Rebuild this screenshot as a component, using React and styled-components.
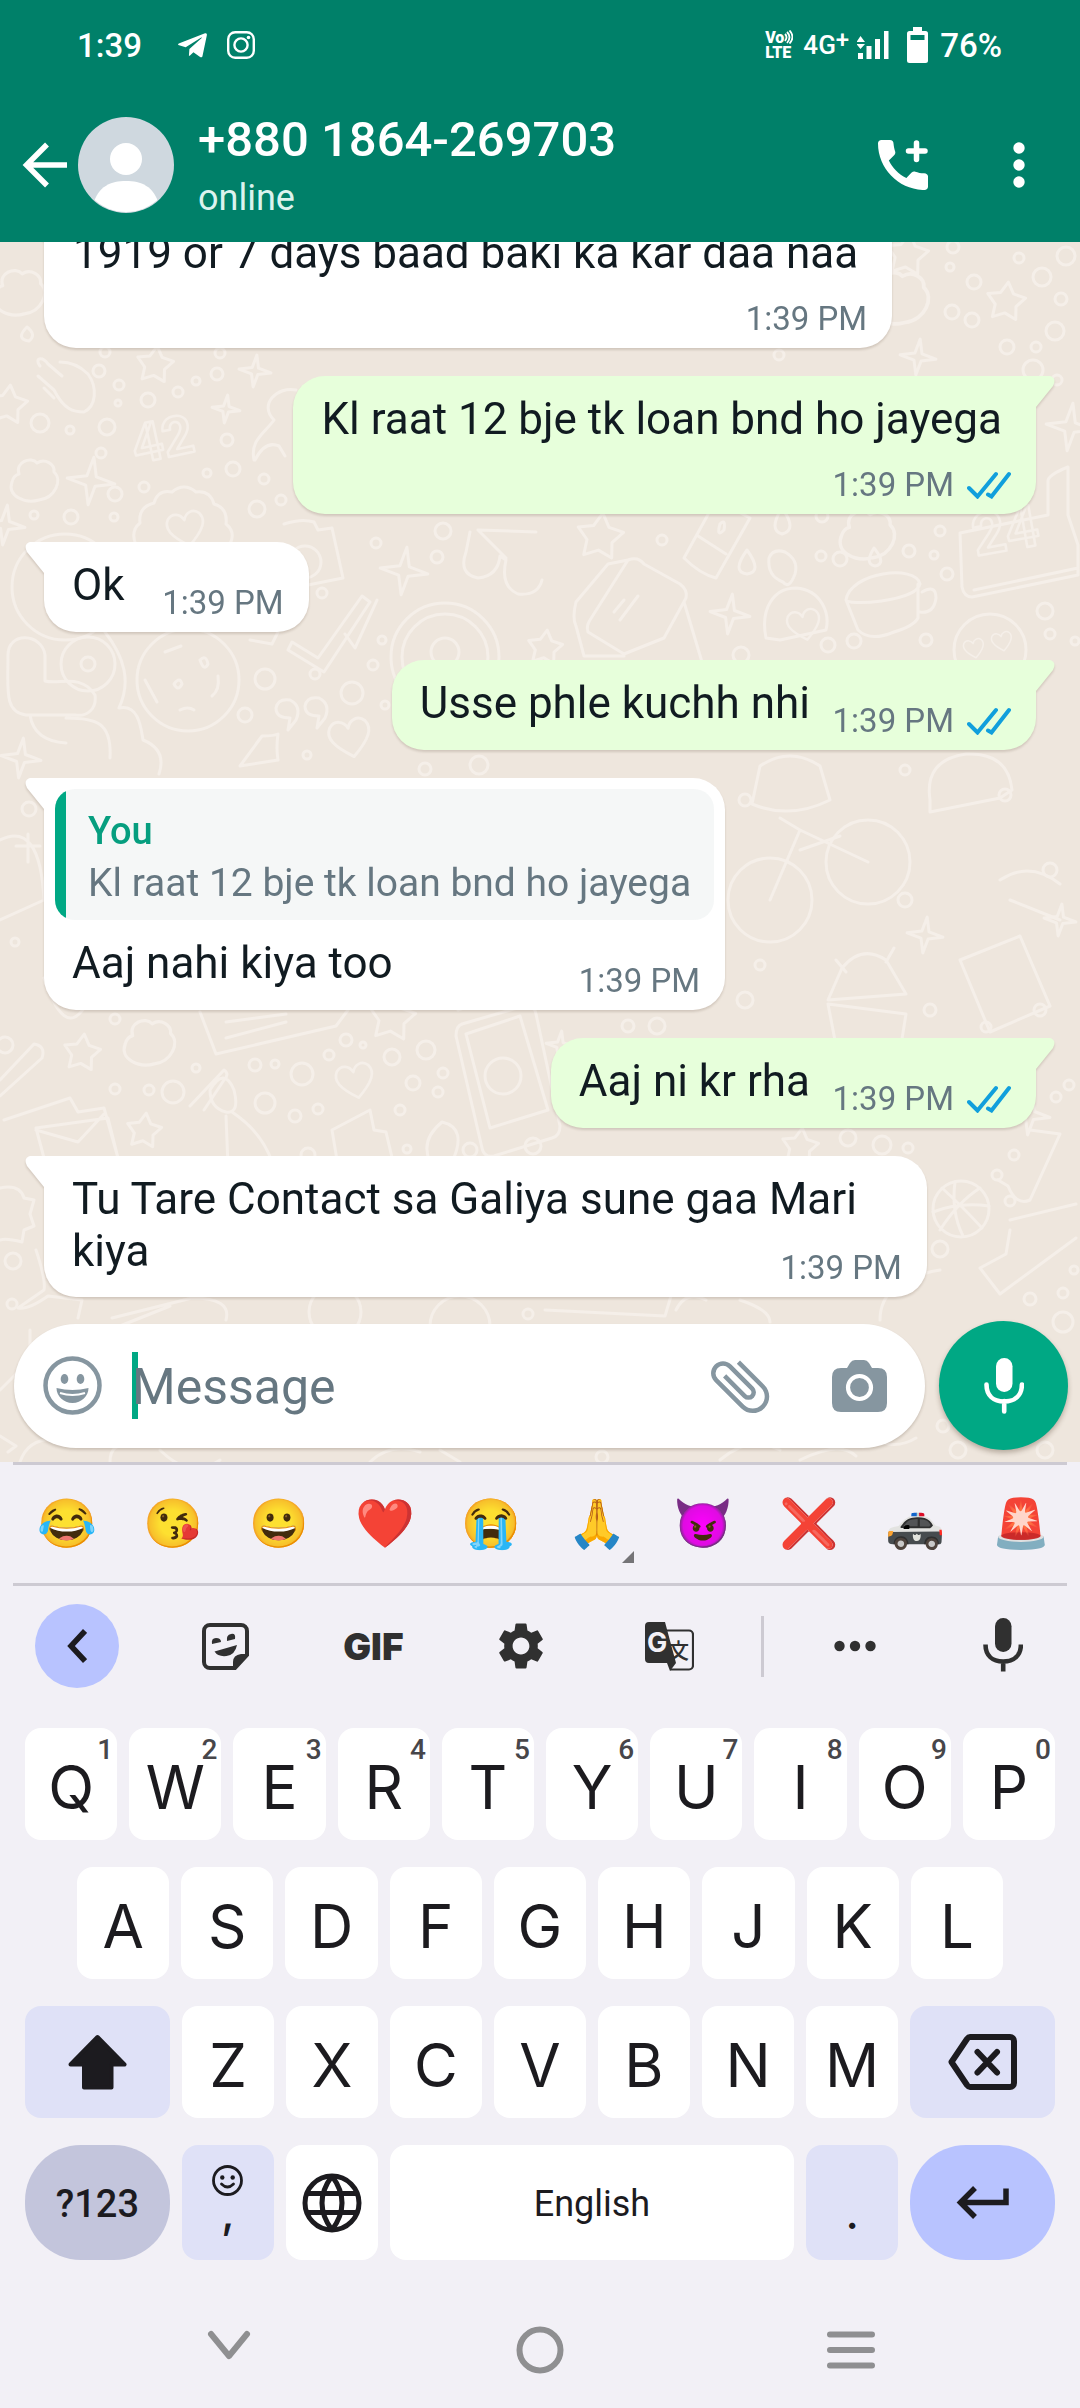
import React from "react";
import styled, { createGlobalStyle } from "styled-components";
import { FaTelegramPlane } from "react-icons/fa";
import { MdSettings, MdAttachFile } from "react-icons/md";

const GlobalStyle = createGlobalStyle`
  * {
    box-sizing: border-box;
  }
  body {
    margin: 0;
    font-family: Roboto, "Noto Sans", sans-serif;
  }
  button {
    border: 0;
    padding: 0;
    background: none;
    color: inherit;
    font: inherit;
    cursor: pointer;
  }
  svg {
    display: block;
    flex-shrink: 0;
  }
`;

const Screen = styled.div`
  display: flex;
  flex-direction: column;
  height: 100vh;
  background: #f2f0f6;
`;

/* ---------- top ---------- */

const TopBar = styled.header`
  background: #008069;
  color: white;
  height: 242px;
  flex-shrink: 0;
`;

const StatusBar = styled.div`
  display: flex;
  align-items: center;
  height: 88px;
  padding: 2px 78px 0 77px;
  font-size: 33px;
  font-weight: 500;
  .spacer {
    flex: 1;
  }
  .time {
    margin-right: 34px;
  }
  .insta {
    margin-left: 18px;
  }
  .net {
    display: flex;
    font-size: 26px;
    line-height: 30px;
    margin: 0 8px 0 10px;
  }
  .net sup {
    font-size: 24px;
    line-height: 20px;
  }
  .battery {
    margin: 0 12px 0 18px;
  }
`;

const Volte = styled.span`
  display: flex;
  flex-direction: column;
  font-size: 16px;
  line-height: 15px;
  font-weight: 900;
  .vo {
    display: flex;
  }
`;

const ContactBar = styled.div`
  display: flex;
  align-items: center;
  height: 154px;
  padding: 0 55px 0 22px;
  .back {
    margin-right: 10px;
  }
  .call {
    margin-right: 85px;
  }
`;

const Contact = styled.div`
  flex: 1;
  margin-left: 24px;
  padding-top: 4px;
  h1 {
    margin: 0;
    font-size: 49px;
    line-height: 62px;
    font-weight: 500;
  }
  p {
    margin: 0;
    font-size: 36px;
    line-height: 54px;
    color: #dcf3ee;
  }
`;

/* ---------- chat ---------- */

const Chat = styled.main`
  position: relative;
  flex: 1;
  min-height: 0;
  display: flex;
  flex-direction: column;
  justify-content: flex-end;
  overflow: hidden;
  background: #eee6dd;
`;

const Wallpaper = styled.svg`
  position: absolute;
  inset: 0;
  width: 100%;
  height: 100%;
  fill: none;
  stroke: #f5efe9;
  stroke-width: 3;
  stroke-linejoin: round;
  stroke-linecap: round;
`;

const Messages = styled.ul`
  position: relative;
  display: flex;
  flex-direction: column;
  gap: 28px;
  margin: 0;
  padding: 0 44px;
  list-style: none;
`;

const Bubble = styled.li`
  position: relative;
  max-width: 89%;
  align-self: ${(p) => (p.$mine ? "flex-end" : "flex-start")};
  background: ${(p) => (p.$mine ? "#e7ffdb" : "white")};
  border-radius: ${(p) => (p.$mine ? "32px 0 32px 32px" : "0 32px 32px 32px")};
  filter: drop-shadow(0 2px 1px rgba(60, 40, 20, 0.16));
  &::before {
    content: "";
    position: absolute;
    top: 0;
    width: 20px;
    height: 31px;
    background: inherit;
    ${(p) =>
      p.$mine
        ? `left: calc(100% - 1px); clip-path: path("M0 0 H15 Q22 2 18 10 L1 31 H0 Z");`
        : `right: calc(100% - 1px); clip-path: path("M20 0 H5 Q-2 2 2 10 L19 31 H20 Z");`}
  }
`;

const gaps = {
  in: "17px 184px 21px 28px",
  out: "17px 226px 21px 28px",
  stacked: "17px 34px 69px 29px",
  wrapped: "17px 48px 20px 28px",
};

// text and time share one grid cell, the time hugs the bottom right corner
const Body = styled.div`
  display: grid;
  p {
    grid-area: 1 / 1;
    margin: 0;
    padding: ${(p) => gaps[p.$layout]};
    font-size: 44px;
    line-height: 52px;
    color: #111b21;
  }
`;

const Meta = styled.div`
  grid-area: 1 / 1;
  align-self: end;
  justify-self: end;
  display: flex;
  align-items: center;
  gap: 13px;
  padding: 0 25px 9px 0;
  font-size: 33px;
  line-height: 40px;
  color: #667781;
`;

const Quote = styled.blockquote`
  margin: 11px 11px 0;
  padding: 16px 23px 11px 33px;
  border-radius: 20px;
  background: linear-gradient(to right, #00a884 11px, #f5f7f7 11px);
  font-size: 39px;
  line-height: 52px;
  color: #667781;
  strong {
    display: block;
    font-size: 38px;
    font-weight: 500;
    color: #069e7f;
  }
`;

const Composer = styled.form`
  position: relative;
  display: flex;
  align-items: center;
  gap: 14px;
  padding: 24px 12px 12px 14px;
`;

const InputPill = styled.div`
  flex: 1;
  display: flex;
  align-items: center;
  height: 124px;
  padding: 0 38px 0 29px;
  border-radius: 62px;
  background: white;
  color: #8696a0;
  box-shadow: 0 2px 3px rgba(60, 40, 20, 0.2);
  .field {
    position: relative;
    flex: 1;
    margin-left: 30px;
    padding-top: 2px;
  }
  .field::before {
    content: "";
    position: absolute;
    left: 0;
    top: -1px;
    width: 6px;
    height: 67px;
    background: #00a884;
  }
  input {
    position: relative;
    width: 100%;
    height: 64px;
    border: 0;
    outline: 0;
    padding: 0;
    background: transparent;
    font: 50px Roboto, sans-serif;
    color: #111b21;
  }
  input::placeholder {
    color: #667781;
    opacity: 1;
  }
  .clip {
    margin-right: 56px;
  }
`;

const MicButton = styled.button.attrs({ type: "button" })`
  display: grid;
  place-items: center;
  width: 129px;
  height: 129px;
  border-radius: 50%;
  background: #00a884;
  color: white;
  box-shadow: 0 3px 5px rgba(60, 40, 20, 0.3);
`;

/* ---------- keyboard ---------- */

const Keyboard = styled.section`
  flex-shrink: 0;
  color: #1c1b1f;
`;

const Rule = styled.hr`
  height: 3px;
  margin: 0 13px;
  border: 0;
  background: #cdcad2;
`;

const EmojiRow = styled.div`
  display: grid;
  grid-template-columns: repeat(10, 1fr);
  height: 118px;
  padding: 0 6px 0 14px;
  button {
    position: relative;
    font-family: "Noto Color Emoji", sans-serif;
    font-size: 48px;
    line-height: 60px;
  }
  .more::after {
    content: "";
    position: absolute;
    right: 16px;
    bottom: 20px;
    border: 6px solid #757477;
    border-top-color: transparent;
    border-left-color: transparent;
  }
`;

const Tools = styled.div`
  display: flex;
  align-items: center;
  height: 120px;
  padding: 0 3px;
  > button {
    flex: 1;
    display: grid;
    place-items: center;
    color: #303030;
  }
  .gif {
    font: 900 37px Inter, sans-serif;
  }
  .line {
    width: 3px;
    height: 61px;
    margin: 0 17px;
    background: #cdcad2;
  }
`;

const Collapse = styled.span`
  display: grid;
  place-items: center;
  width: 84px;
  height: 84px;
  border-radius: 50%;
  background: #b8c3ff;
  color: #1c1b1f;
`;

const Keys = styled.div`
  display: flex;
  flex-direction: column;
  gap: 27px;
  padding: 22px 25px 0;
`;

const KeyRow = styled.div`
  display: flex;
  gap: 12px;
  padding: 0 ${(p) => (p.$indent ? 52 : 0)}px;
`;

const tones = {
  plain: "white",
  soft: "#dfe1f7",
  dark: "#c3c5dc",
  accent: "#b8c3ff",
};

const Key = styled.button`
  position: relative;
  display: flex;
  flex-direction: column;
  align-items: center;
  justify-content: center;
  flex: ${(p) => p.$grow || 92} 0 0;
  height: ${(p) => (p.$tall ? 115 : 112)}px;
  padding-top: ${(p) => (p.$letter ? 6 : 0)}px;
  border-radius: ${(p) => (p.$pill ? 56 : 16)}px;
  background: ${(p) => tones[p.$tone || "plain"]};
  font: 400 60px/72px Inter, sans-serif;
  small {
    position: absolute;
    top: 5px;
    right: 4px;
    font: 500 28px/34px Roboto, sans-serif;
    color: #47464a;
  }
  .label {
    padding-top: 2px;
    font: 400 36px/44px Roboto, sans-serif;
  }
  .mode {
    padding-top: 2px;
    font: 500 38px/48px Roboto, sans-serif;
  }
  .punct {
    padding-bottom: 12px;
    font: 500 44px/32px Inter, sans-serif;
  }
  .low {
    padding-top: 32px;
  }
`;

const NavBar = styled.nav`
  display: grid;
  grid-template-columns: repeat(3, 1fr);
  height: 148px;
  flex-shrink: 0;
  padding: 32px 73px 0;
  color: #8f8f91;
  button {
    display: grid;
    place-items: center;
  }
  .hide {
    padding-bottom: 10px;
  }
`;

/* ---------- icons ---------- */

const Line = ({ w, h, sw, children, ...rest }) => (
  <svg
    width={w}
    height={h}
    viewBox={`0 0 ${w} ${h}`}
    fill="none"
    stroke="currentColor"
    strokeWidth={sw}
    aria-hidden="true"
    {...rest}
  >
    {children}
  </svg>
);

const InstagramIcon = () => (
  <Line w={28} h={28} sw={2.4} className="insta">
    <rect x="1.2" y="1.2" width="25.6" height="25.6" rx="7" />
    <circle cx="14" cy="14" r="6.6" />
    <circle cx="21.5" cy="6.5" r="1.8" fill="currentColor" stroke="none" />
  </Line>
);

const WavesIcon = () => (
  <Line w={9} h={14} sw={1.8}>
    <path d="M1 4 q3 3 0 7 M3 2 q5 5 0 11 M5.5 .5 q6 6.5 0 13" />
  </Line>
);

const SignalIcon = () => (
  <Line w={32} h={28} sw={0} fill="currentColor">
    <path d="M1 22h5v6H1zM9.5 15h5v13h-5zM18 8h5v20h-5zM27 0h4.5v28H27zM3.5 5L8 11H-.5zM3.5 18L8 13H-.5z" />
  </Line>
);

const BatteryIcon = () => (
  <Line w={21} h={36} sw={0} fill="currentColor" className="battery">
    <path d="M6 0h9v4h-9z" />
    <rect y="4" width="21" height="32" rx="2.5" />
    <rect x="3.5" y="8" width="14" height="5" fill="#008069" />
  </Line>
);

const BackIcon = () => (
  <Line w={46} h={46} sw={5.5}>
    <path d="M45 23H5M25 2.5L4.5 23L25 43.5" />
  </Line>
);

const Avatar = () => (
  <svg width="96" height="96" viewBox="0 0 96 96" aria-hidden="true">
    <clipPath id="face">
      <circle cx="48" cy="48" r="47" />
    </clipPath>
    <circle cx="48" cy="48" r="48" fill="#cfd8df" />
    <g clipPath="url(#face)" fill="white">
      <circle cx="48" cy="42" r="16" />
      <path d="M15 88C20 69 33 64 48 64s28 5 33 24v10H15z" />
    </g>
  </svg>
);

const CallAddIcon = () => (
  <Line w={50} h={50} sw={5.5} strokeLinecap="round">
    <path
      transform="translate(-8.34 -8.34) scale(2.78)"
      fill="currentColor"
      stroke="none"
      d="M19.6 15c-1.2 0-2.2-.3-3.2-.6-.5-.2-.9 0-1.3.3l-1.9 2c-2.83-1.44-5-3.6-6.3-6.3l1.9-1.9c.4-.4.5-.9.4-1.3C8.8 6 8.7 5.3 8.6 4.4c0-.9-.5-1.4-1.3-1.4H4.300c-.8 0-1.300.5-1.300 1.300C3 13.400 10.600 21 19.700 21c.8 0 1.300-.5 1.300-1.300v-3.400c0-.8-.5-1.200-1.400-1.300z"
    />
    <path d="M38.5 3v16.5M30.5 11h16.5" />
  </Line>
);

const DotsIcon = () => (
  <Line w={12} h={46} sw={0} fill="currentColor">
    <circle cx="6" cy="6" r="5.7" />
    <circle cx="6" cy="23" r="5.7" />
    <circle cx="6" cy="40" r="5.7" />
  </Line>
);

const TicksIcon = () => (
  <Line w={44} h={28} sw={4} stroke="#119fdc" strokeLinecap="round">
    <path d="M2 17l8.5 8.5L29 3M21 23.5l3.5 2L42 3" />
  </Line>
);

const SmileIcon = () => (
  <Line w={59} h={59} sw={4.5}>
    <circle cx="29.5" cy="29.5" r="27" />
    <g fill="currentColor" stroke="none">
      <ellipse cx="21.5" cy="23" rx="3.8" ry="5" />
      <ellipse cx="37.5" cy="23" rx="3.8" ry="5" />
      <path d="M13.5 32q16 4 32 0c0 8-7 15-16 15s-16-7-16-15z" />
    </g>
    <path d="M17 37q12.5 4 25 0" stroke="white" strokeWidth="2" />
  </Line>
);

const CameraIcon = () => (
  <Line w={55} h={52} sw={0} fill="currentColor">
    <path d="M9 8h6l3-5q2-3 5-3h9q3 0 5 3l3 5h6q9 0 9 9v26q0 9-9 9H9q-9 0-9-9V17q0-9 9-9z" />
    <circle cx="27.5" cy="27.5" r="11.5" stroke="white" strokeWidth="4.2" />
  </Line>
);

const MicIcon = ({ round }) => (
  <Line w={40} h={56} sw={4.6} strokeLinecap={round ? "round" : "butt"}>
    <rect x="12" y="0" width="16.5" height="34" rx="8.2" fill="currentColor" stroke="none" />
    <path d="M2.5 26.5c0 11 7 17 17.7 17s17.7-6 17.7-17M20.2 43v10.5" />
  </Line>
);

const StickerIcon = () => (
  <Line w={47} h={47} sw={4}>
    <path d="M8 2h31a6 6 0 0 1 6 6v24L33 45H8a6 6 0 0 1-6-6V8a6 6 0 0 1 6-6z" />
    <g fill="currentColor" stroke="none">
      <path d="M46 31h-7q-8 1-8 8v7z" />
      <path d="M10 21q-1-6 4-6t5 4zM25 18q-1-6 4-7t4 5zM12.5 28.5L35 22q-2 10-10.5 11t-12-4.5z" />
    </g>
  </Line>
);

const TranslateIcon = () => (
  <Line w={49} h={49} sw={2.2}>
    <path d="M20 8.5h24a4 4 0 0 1 4 4v31a4 4 0 0 1-4 4H25" />
    <text
      x="23"
      y="36"
      fontSize="21"
      fontWeight="500"
      fontFamily="Noto Sans CJK JP"
      fill="currentColor"
      stroke="none"
    >
      文
    </text>
    <path d="M4 0h16l11 41-6 8-3-8H4a4 4 0 0 1-4-4V4a4 4 0 0 1 4-4z" fill="currentColor" stroke="none" />
    <text x="2" y="30" fontSize="27" fontWeight="700" fontFamily="Inter" fill="#f2f0f6" stroke="none">
      G
    </text>
  </Line>
);

const EllipsisIcon = () => (
  <Line w={42} h={12} sw={0} fill="currentColor">
    <circle cx="5.5" cy="6" r="5.2" />
    <circle cx="21" cy="6" r="5.2" />
    <circle cx="36.5" cy="6" r="5.2" />
  </Line>
);

const ShiftIcon = () => (
  <Line w={59} h={56} sw={4} fill="currentColor" strokeLinejoin="round">
    <path d="M29.5 3L56.5 30.5H43.5V53.5H16V30.5H2.5z" />
  </Line>
);

const BackspaceIcon = () => (
  <Line w={70} h={56} sw={6} strokeLinejoin="round">
    <path d="M22 3h40a4 4 0 0 1 4 4v42a4 4 0 0 1-4 4H22q-1.5 0-3-2L3.5 28L19 5q1.5-2 3-2z" />
    <path d="M29.5 18l19.5 20.5M49 18L29.5 38.5" strokeLinecap="round" />
  </Line>
);

const GlobeIcon = () => (
  <Line w={60} h={60} sw={5}>
    <circle cx="30" cy="30" r="27" />
    <path d="M5 20.5h50M5 39.5h50M30 3q-20 27 0 54M30 3q20 27 0 54" />
  </Line>
);

const SmallSmile = () => (
  <Line w={31} h={31} sw={2.8}>
    <circle cx="15.5" cy="15.5" r="14" />
    <circle cx="10.3" cy="12.5" r="2.2" fill="currentColor" stroke="none" />
    <circle cx="20.7" cy="12.5" r="2.2" fill="currentColor" stroke="none" />
    <path d="M9.5 19q6 6 12 0" strokeLinecap="round" />
  </Line>
);

const EnterIcon = () => (
  <Line w={53} h={33} sw={5.5}>
    <path d="M50 2.5v14H4M19 2L4.5 16.5L19 31" />
  </Line>
);

/* ---------- wallpaper drawing ---------- */

const rings = [
  [99, 371, 6], [119, 385, 5], [217, 374, 6], [196, 381, 4], [178, 392, 5], [148, 400, 7],
  [40, 423, 9], [70, 430, 4], [118, 403, 3], [107, 427, 8], [101, 453, 5], [227, 440, 6],
  [233, 469, 7], [207, 473, 4], [264, 479, 5], [144, 487, 5], [115, 494, 7], [281, 500, 5],
  [257, 509, 8], [34, 515, 4], [71, 517, 7], [114, 517, 4], [443, 531, 8], [376, 543, 5],
  [437, 557, 6], [322, 593, 5], [382, 640, 4], [373, 665, 5], [265, 679, 10], [315, 674, 5],
  [352, 693, 11], [385, 705, 4], [245, 715, 7], [307, 755, 4], [662, 540, 5], [821, 556, 5],
  [840, 559, 7], [909, 551, 6], [940, 531, 5], [934, 555, 4], [947, 574, 6], [822, 516, 6],
  [828, 645, 7], [854, 641, 7], [926, 640, 6], [1045, 611, 8], [1050, 634, 5], [1075, 641, 4],
  [1033, 370, 10], [1057, 380, 5], [741, 655, 8], [29, 809, 7], [15, 942, 4], [115, 1019, 5],
  [5, 1045, 8], [196, 1068, 4], [255, 1065, 6], [275, 1064, 4], [302, 1074, 11], [115, 1089, 5],
  [149, 1090, 5], [173, 1092, 11], [265, 1103, 10], [295, 1116, 6], [318, 1109, 5],
  [346, 1040, 6], [363, 1045, 3], [329, 1055, 5], [392, 1057, 8], [426, 1050, 9], [443, 1073, 5],
  [413, 1083, 7], [438, 1092, 5], [400, 1110, 5], [628, 1026, 6], [657, 1026, 8], [425, 769, 6],
  [479, 765, 9], [407, 1149, 4], [533, 1146, 8], [953, 247, 6], [1019, 258, 5], [1066, 256, 9],
  [950, 267, 4], [974, 282, 7], [1042, 277, 9], [1061, 299, 6], [952, 312, 7], [972, 320, 7],
  [1055, 331, 9], [1007, 347, 7], [1036, 347, 5], [105, 352, 5], [220, 353, 5], [779, 355, 5],
  [848, 1138, 8], [882, 1145, 9], [908, 1148, 5], [1069, 1085, 5], [1056, 1097, 5],
  [1014, 1155, 5], [997, 1175, 5], [1010, 1201, 5], [940, 1249, 8], [1030, 1299, 6],
  [1063, 1293, 5], [1063, 1322, 10], [1074, 1270, 4], [13, 1261, 8], [12, 1304, 5],
  [528, 1314, 5], [943, 1426, 6], [958, 1450, 8], [1045, 1450, 8], [986, 1027, 5],
  [470, 1150, 7], [308, 1155, 7], [602, 1457, 6], [1005, 795, 6], [745, 800, 6], [905, 900, 7],
  [930, 1010, 6], [745, 1000, 8], [1050, 870, 7], [1040, 1010, 6], [905, 770, 5], [760, 965, 5],
];

const stars = [
  [8, 405, 20], [155, 365, 19], [600, 537, 24], [82, 1053, 19], [392, 1018, 24],
  [144, 1131, 18], [1006, 302, 20], [907, 255, 22], [800, 1147, 19], [545, 648, 18],
];

const sparkles = [
  [255, 371, 16], [226, 409, 14], [91, 481, 24], [404, 571, 24], [5, 525, 20], [21, 758, 20],
  [730, 614, 20], [1070, 427, 24], [918, 357, 18], [1030, 1115, 20], [560, 1045, 14],
  [925, 935, 18], [1060, 920, 16],
];

const hearts = [
  [186, 528, 18], [350, 737, 20], [804, 624, 16], [974, 648, 10], [1002, 641, 10], [355, 1080, 18],
];

const clouds = [
  [20, 290, 26], [35, 478, 24], [900, 295, 30], [868, 532, 28], [150, 1040, 26],
];

const polar = (cx, cy, r, n, inner) =>
  "M" +
  Array.from({ length: n * 2 }, (_, i) => {
    const a = (Math.PI * i) / n - 1.45;
    const k = i % 2 ? r * inner : r;
    return `${(cx + k * Math.cos(a)).toFixed(1)} ${(cy + k * Math.sin(a)).toFixed(1)}`;
  }).join("L") +
  "Z";

const Doodles = () => (
  <Wallpaper viewBox="0 242 1080 1220" preserveAspectRatio="xMidYMin slice" aria-hidden="true">
    {rings.map(([x, y, r], i) => (
      <circle key={i} cx={x} cy={y} r={r} />
    ))}
    {stars.map(([x, y, r], i) => (
      <path key={i} d={polar(x, y, r, 5, 0.55)} />
    ))}
    {sparkles.map(([x, y, r], i) => (
      <path key={i} d={polar(x, y, r, 4, 0.28)} />
    ))}
    {hearts.map(([x, y, s], i) => (
      <path
        key={i}
        transform={`translate(${x} ${y}) rotate(-12) scale(${s / 20})`}
        d="M0 20C-18 6-24-4-18-13-12-20-3-17 0-9 3-17 12-20 18-13 24-4 18 6 0 20z"
      />
    ))}
    {clouds.map(([x, y, s], i) => (
      <path
        key={i}
        transform={`translate(${x} ${y}) scale(${s / 24})`}
        d="M-16-4C-20-16-4-22 2-15 10-20 20-14 19-6 28 2 20 20 4 22-10 26-28 18-23 4-22 0-20-3-16-4z"
      />
    ))}
    {/* badge, cookie, ring, basketball */}
    <path d="M136 545q-6-14 4-22-2-16 14-20 4-14 18-11 12-10 24 0 14-2 18 12 14 4 12 20 10 8 4 20M139 545q48 30 96 0" />
    <circle cx="188" cy="680" r="51" />
    <path d="M165 652l16-6M200 660q6-6 8 4-4 8-8-4M174 684q6-8 8 0-4 8-8 0M145 680l12 22M218 676q2 14-6 20M180 710q8-4 14 0" />
    <circle cx="445" cy="657" r="54" />
    <circle cx="445" cy="657" r="43" />
    <circle cx="445" cy="652" r="14" />
    <circle cx="961" cy="1209" r="28" />
    <path d="M942 1188q20 18 40 40M980 1188q-22 14-40 42M933 1212q26-10 56-6M955 1182q-4 30 8 54" />
    {/* dancer with a speaker */}
    <circle cx="65" cy="587" r="53" />
    <circle cx="88" cy="664" r="27" />
    <circle cx="88" cy="664" r="7" />
    <path d="M8 655c0-24 34-22 37 0v26c14 4 36-8 50 14 2 14-8 22-20 20H26C4 712 8 690 8 655zM30 715q4 26 36 28M66 718c30 0 46 4 44 40M105 632c20 26 26 50 14 76 20-4 22 20 24 32 20 8 20 22 16 34" />
    {/* hand, camera, glasses, ticks, quotes */}
    <path d="M40 366c-6-8 2-10 8-2l14 12M38 376l16 14M44 388l10 10M54 390c10 20 20 22 30 22 12-6 14-24 4-38-10-10-20-12-28-12" />
    <path d="M284 524q18-6 30-2l4 8 14-2 11 50-50 10" />
    <circle cx="305" cy="562" r="16" />
    <path d="M470 532l-4 20q-8 22 12 26 20-2 22-22l6 4q-6 26 12 34 20 2 24-14M478 530l58 2M478 530l28 28" />
    <path d="M292 642l26 16 44-62 8 6-46 70-36-22zM345 634l10 14 22-48M250 640l22 4 6-12" />
    <path d="M276 708q2-10 14-8 12 6 6 20l-8 10 2-12q-14 0-14-10zM305 706q2-10 14-8 12 6 6 20l-8 10 2-12q-14 0-14-10z" />
    <path d="M240 766l22-30q12 0 16-2-2 14 0 26z" />
    <text x="136" y="464" fontSize="54" fontWeight="700" transform="rotate(-12 136 464)" strokeWidth="2.5">
      42
    </text>
    <path d="M254 460c-4-20 10-26 20-40-16-16 4-34 22-30M255 460q10-20 24-14l6 10" />
    {/* bottle, drops, box, face, cup, calendar */}
    <path d="M716 500l-32 58q16 16 32 20l34-60zM698 536l28 18M720 524q6-6 4 6-8 8-4-6" />
    <path d="M747 550q-16 22 0 24 16-2 0-24zM874 548q-10 16 1 18 12-2-1-18zM782 508q-14 22 0 26 16-4 0-26zM27 327q-12 12 2 14 8-6-2-14z" />
    <path d="M769 558q4-10 16-6 14 8 10 22-6 16-12 8-16-6-14-24z" />
    <path d="M628 560q10-4 16 4l36 20q8 6 6 14l-22 40-40 16-36-22q-2-6 2-12zM628 560l-20 4-32 38q-4 16 0 24l8 30h40M684 602l18 60M620 620l18-24M614 612l10-12" />
    <path d="M766 638c-6-30 8-50 30-50 26 2 34 26 30 42l-46 10z" />
    <path d="M846 600c4-28 70-36 74-16-4 18-74 22-74 16l12 30q12 12 36 2 20-6 24-14V584M922 592q14-8 14 6-2 16-16 14" />
    <path d="M960 533l88-18v-34q0-6 20-14v48l10 30v30l-106 22q-8 0-10-10zM974 590l104-22" />
    <text x="976" y="556" fontSize="58" fontWeight="700" transform="rotate(-10 976 556)" strokeWidth="2.5">
      24
    </text>
    <circle cx="990" cy="650" r="36" />
    {/* right side: cap, headphones, bicycle, robot, book */}
    <circle cx="770" cy="900" r="42" />
    <circle cx="868" cy="862" r="42" />
    <path d="M770 900l30-70 68 32M800 830l-20-12M800 850l40-14" />
    <path d="M828 1000l14-32q20-24 44-8l20 34zM828 1004l78 10-8 50-60-8zM846 972l-10-12M886 962l8-14" />
    <path d="M930 800q-6-40 36-46 42-2 46 36l-12 8-70 14zM760 766q30-20 60 0l10 34q-40 20-78 4z" />
    <path d="M960 960l60-24 30 70-60 26zM1000 880q30-20 60 4M1010 900l50 20" />
    {/* phone, envelopes, balloon, clock */}
    <path d="M462 1024l62-18q10-2 12 8l24 112q0 10-8 12l-58 18q-10 2-12-8l-26-112q0-10 6-12zM466 1034l54-18 28 94-58 18z" />
    <circle cx="503" cy="1076" r="18" />
    <path d="M442 1122q-22 18-12 40 10 14 22 0 16-34-10-40zM4 1120l66-22 8 14 26-4 14 50M36 1128l72-10 10 40H44zM36 1130l42 12 26-28" />
    <path d="M200 1012l16 42 120-28 12-16M226 1022l60-8M226 1038l60-16M458 1010q60-24 90-4" />
    <path d="M0 840q40-20 44 60l-44 20M16 846h24M28 834v28M44 978q20 60 40 30M0 1080l34-36q12 2 8 14L0 1096" />
    <path d="M190 1106l34-36q6 4 0 10l-20 30M210 1090q14-24 24 0 6 24-8 22-16-4-16-22zM232 1112q30 20 40 50M226 1116l2 50M332 1130l38-20 4 20 12 2 8 34h-56z" />
    {/* bottom strip */}
    <path d="M0 1188q20-4 24 10l10 2-4 14 4 12-10 4-2 12q-16-4-22-2M36 1250q10 30 8 40l-26 18q10 2 30-12l34 4-4 18M110 1330l60-24M112 1318l80-20q40 0 34 22" />
    <circle cx="335" cy="1312" r="26" />
    <circle cx="460" cy="1326" r="30" />
    <path d="M545 1310l120 6 6-20M676 1310q10-20 30-10M740 1300q30 10 30 22M880 1320q0-40 60-50M1030 1130l30 4-30 66q-14 6-22-14l-10-6M1010 1220l66-16M1010 1230l-4 24-26 14 20 26 76-56M0 1390l30-30v-30M20 1462q10-30 50-20M110 1462q0-20 20-16M160 1450q30 30 60 10" />
    <path d="M370 1462q20-20 50-10M440 1450l20 12M720 1460q30-26 60-10M800 1460q40-20 56-4M876 1440q20 10 40-2M0 1436l16 10-8 6" />
  </Wallpaper>
);

/* ---------- content ---------- */

const messages = [
  { text: "1919 or 7 days baad baki ka kar daa naa", layout: "stacked" },
  { text: "Kl raat 12 bje tk loan bnd ho jayega", layout: "stacked", mine: true },
  { text: "Ok" },
  { text: "Usse phle kuchh nhi", mine: true },
  { text: "Aaj nahi kiya too", quote: "Kl raat 12 bje tk loan bnd ho jayega" },
  { text: "Aaj ni kr rha", mine: true },
  { text: "Tu Tare Contact sa Galiya sune gaa Mari kiya", layout: "wrapped" },
];

const emojis = ["😂", "😘", "😀", "❤️", "😭", "🙏", "😈", "❌", "🚓", "🚨"];

const Message = ({ text, mine, quote, layout }) => (
  <Bubble $mine={mine}>
    {quote && (
      <Quote>
        <strong>You</strong>
        {quote}
      </Quote>
    )}
    <Body $layout={layout || (mine ? "out" : "in")}>
      <p>{text}</p>
      <Meta>
        <time>1:39 PM</time>
        {mine && <TicksIcon />}
      </Meta>
    </Body>
  </Bubble>
);

const Letters = ({ row }) =>
  row.split("").map((l) => (
    <Key key={l} $letter>
      {l}
    </Key>
  ));

const App = () => {
  return (
    <Screen>
      <GlobalStyle />
      <TopBar>
        <StatusBar>
          <span className="time">1:39</span>
          <FaTelegramPlane size={33} />
          <InstagramIcon />
          <span className="spacer" />
          <Volte>
            <span className="vo">
              Vo
              <WavesIcon />
            </span>
            <span>LTE</span>
          </Volte>
          <span className="net">
            4G<sup>+</sup>
          </span>
          <SignalIcon />
          <BatteryIcon />
          <span>76%</span>
        </StatusBar>
        <ContactBar>
          <button className="back" aria-label="Back">
            <BackIcon />
          </button>
          <Avatar />
          <Contact>
            <h1>+880 1864-269703</h1>
            <p>online</p>
          </Contact>
          <button className="call" aria-label="Add call">
            <CallAddIcon />
          </button>
          <button aria-label="More options">
            <DotsIcon />
          </button>
        </ContactBar>
      </TopBar>

      <Chat>
        <Doodles />
        <Messages>
          {messages.map((m) => (
            <Message key={m.text} {...m} />
          ))}
        </Messages>
        <Composer>
          <InputPill>
            <button type="button" aria-label="Emoji">
              <SmileIcon />
            </button>
            <div className="field">
              <input type="text" placeholder="Message" aria-label="Message" />
            </div>
            <button type="button" className="clip" aria-label="Attach">
              <MdAttachFile size={72} transform="rotate(-45)" />
            </button>
            <button type="button" aria-label="Camera">
              <CameraIcon />
            </button>
          </InputPill>
          <MicButton aria-label="Record voice message">
            <MicIcon round />
          </MicButton>
        </Composer>
      </Chat>

      <Keyboard>
        <Rule />
        <EmojiRow>
          {emojis.map((e) => (
            <button key={e} className={e === "🙏" ? "more" : undefined}>
              {e}
            </button>
          ))}
        </EmojiRow>
        <Rule />
        <Tools>
          <button aria-label="Collapse">
            <Collapse>
              <Line w={20} h={34} sw={5.5}>
                <path d="M18 2L4 17l14 15" />
              </Line>
            </Collapse>
          </button>
          <button aria-label="Stickers">
            <StickerIcon />
          </button>
          <button className="gif">GIF</button>
          <button aria-label="Settings">
            <MdSettings size={56} />
          </button>
          <button aria-label="Translate">
            <TranslateIcon />
          </button>
          <span className="line" />
          <button aria-label="More tools">
            <EllipsisIcon />
          </button>
          <button aria-label="Voice typing">
            <MicIcon />
          </button>
        </Tools>
        <Keys>
          <KeyRow>
            {"QWERTYUIOP".split("").map((l, i) => (
              <Key key={l} $letter>
                {l}
                <small>{(i + 1) % 10}</small>
              </Key>
            ))}
          </KeyRow>
          <KeyRow $indent>
            <Letters row="ASDFGHJKL" />
          </KeyRow>
          <KeyRow>
            <Key $grow={145} $tone="soft" aria-label="Shift">
              <ShiftIcon />
            </Key>
            <Letters row="ZXCVBNM" />
            <Key $grow={145} $tone="soft" aria-label="Backspace">
              <BackspaceIcon />
            </Key>
          </KeyRow>
          <KeyRow>
            <Key $grow={145} $tone="dark" $tall $pill>
              <span className="mode">?123</span>
            </Key>
            <Key $tone="soft" $tall>
              <SmallSmile />
              <span className="punct">,</span>
            </Key>
            <Key $tall aria-label="Change language">
              <GlobeIcon />
            </Key>
            <Key $grow={405} $tall>
              <span className="label">English</span>
            </Key>
            <Key $tone="soft" $tall>
              <span className="punct low">.</span>
            </Key>
            <Key $grow={145} $tone="accent" $tall $pill aria-label="Enter">
              <EnterIcon />
            </Key>
          </KeyRow>
        </Keys>
      </Keyboard>

      <NavBar>
        <button className="hide" aria-label="Hide keyboard">
          <Line w={44} h={30} sw={6} strokeLinecap="round" strokeLinejoin="round">
            <path d="M4 4l18 22L40 4" />
          </Line>
        </button>
        <button aria-label="Home">
          <Line w={48} h={48} sw={6}>
            <circle cx="24" cy="24" r="20.5" />
          </Line>
        </button>
        <button aria-label="Recent apps">
          <Line w={50} h={38} sw={6} strokeLinecap="round">
            <path d="M4 3.5h42M4 19h42M4 34.5h42" />
          </Line>
        </button>
      </NavBar>
    </Screen>
  );
};

export default App;
